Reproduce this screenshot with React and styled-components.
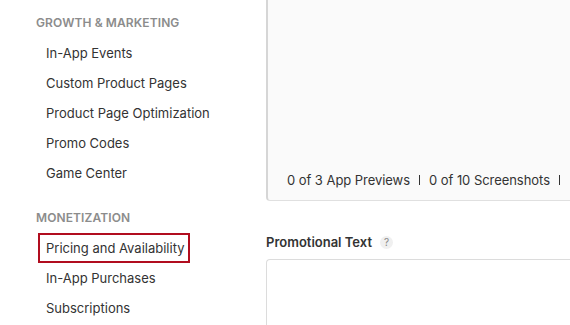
import React from "react";
import styled, { createGlobalStyle } from "styled-components";

const Global = createGlobalStyle`
  html, body { margin: 0; padding: 0; background: #fff; }
  body { font-family: Inter, "Liberation Sans", Arial, sans-serif; color: #333; -webkit-font-smoothing: antialiased; }
  #root { width: 570px; height: 325px; overflow: hidden; }
`;

const Page = styled.div`
  display: flex;
  width: 570px;
  height: 325px;
  overflow: hidden;
`;

const Sidebar = styled.nav`
  width: 230px;
  flex: none;
  padding: 16px 0 0 36px;
  display: flex;
  flex-direction: column;
`;

const Heading = styled.div`
  font-size: 12px;
  font-weight: 600;
  color: #8c8c8c;
  text-transform: uppercase;
  letter-spacing: 0.1px;
  line-height: 14px;
  height: 14px;
  margin-top: ${(p) => (p.$first ? "0" : "23px")};
  margin-bottom: 8px;
`;

const Item = styled.a`
  display: block;
  align-self: flex-start;
  font-size: 13px;
  line-height: 16px;
  height: 16px;
  color: #333;
  text-decoration: none;
  padding: 5px 4px 5px 6px;
  margin-left: 2px;
  border: 2px solid ${(p) => (p.$selected ? "#b10d1f" : "transparent")};
`;

const Main = styled.main`
  flex: 1;
  min-width: 0;
  display: flex;
  flex-direction: column;
`;

const MediaPanel = styled.div`
  margin-top: -10px;
  height: 211px;
  flex: none;
  box-sizing: border-box;
  background: #fafafa;
  border: 1px solid #e0e0e0;
  border-left: 2px solid #d6d6d6;
  border-right: none;
  border-radius: 0 0 0 4px;
  display: flex;
  flex-direction: column;
  justify-content: flex-end;
  padding: 0 0 12px 19px;
`;

const Counts = styled.div`
  display: flex;
  align-items: center;
  gap: 9px;
  font-size: 13px;
  line-height: 16px;
  color: #333;
  white-space: nowrap;
  letter-spacing: -0.05px;
`;

const Sep = styled.span`
  width: 1px;
  height: 10px;
  background: #333;
`;

const LabelRow = styled.div`
  display: flex;
  align-items: center;
  gap: 8px;
  margin-top: 33px;
  font-size: 13px;
  line-height: 16px;
  font-weight: 600;
  color: #333;
`;

const Help = styled.span`
  width: 13px;
  height: 13px;
  border-radius: 50%;
  background: #f0f0f0;
  color: #888;
  font-size: 10px;
  font-weight: 400;
  display: flex;
  align-items: center;
  justify-content: center;
`;

const TextArea = styled.div`
  margin-top: 9px;
  flex: 1;
  margin-bottom: -10px;
  border: 1px solid #dcdcdc;
  border-right: none;
  border-radius: 4px 0 0 0;
`;

export default function App() {
  return (
    <>
      <Global />
      <Page>
        <Sidebar>
          <Heading $first>Growth &amp; Marketing</Heading>
          <Item>In-App Events</Item>
          <Item>Custom Product Pages</Item>
          <Item>Product Page Optimization</Item>
          <Item>Promo Codes</Item>
          <Item>Game Center</Item>
          <Heading>Monetization</Heading>
          <Item $selected>Pricing and Availability</Item>
          <Item>In-App Purchases</Item>
          <Item>Subscriptions</Item>
        </Sidebar>
        <Main>
          <MediaPanel>
            <Counts>
              <span>0 of 3 App Previews</span>
              <Sep />
              <span>0 of 10 Screenshots</span>
              <Sep />
            </Counts>
          </MediaPanel>
          <LabelRow>
            Promotional Text <Help>?</Help>
          </LabelRow>
          <TextArea />
        </Main>
      </Page>
    </>
  );
}
